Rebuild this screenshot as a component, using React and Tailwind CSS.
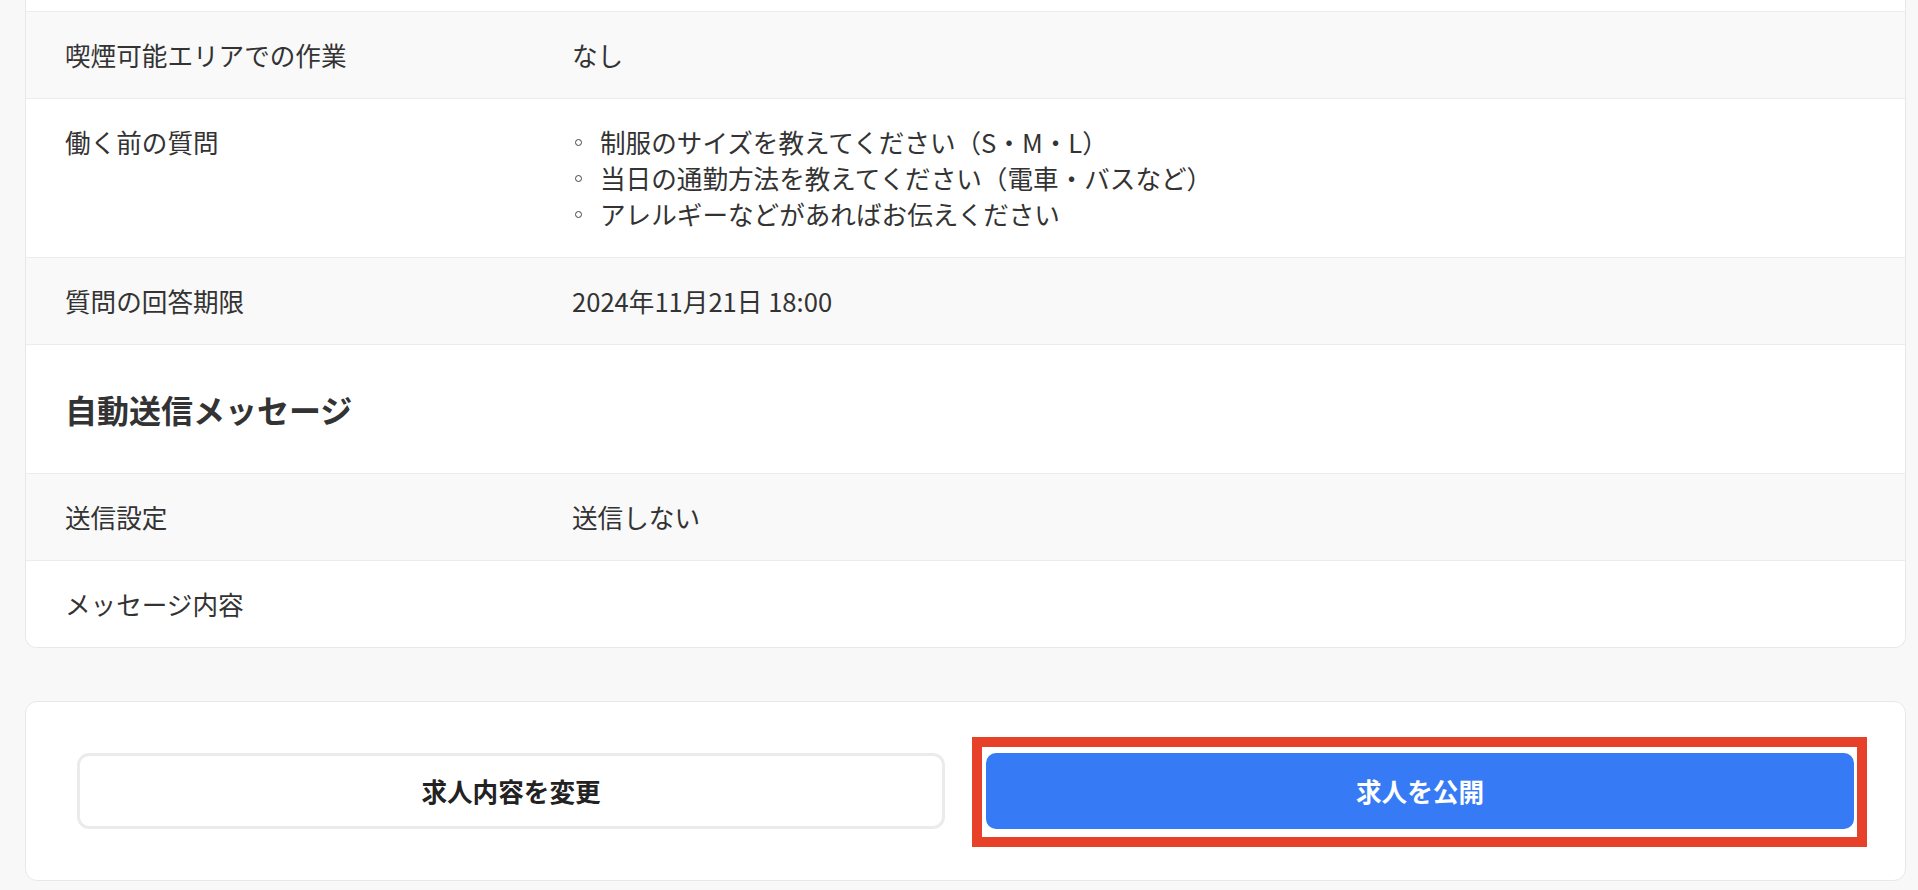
import React from "react";

const font = { fontFamily: '"Noto Sans CJK JP", "Noto Sans", sans-serif' };

function Row({ label, children, gray, top }) {
  return (
    <div
      className={`flex border-t border-[#ececec] px-[39px] py-[25px] text-[25.6px] leading-[36px] text-[#333333] ${
        gray ? "bg-[#f9f9f9]" : "bg-white"
      } ${top ? "items-start" : "items-center"}`}
    >
      <div className="w-[507px] shrink-0">{label}</div>
      <div className="flex-1">{children}</div>
    </div>
  );
}

function Bullet({ children }) {
  return (
    <li className="flex items-center">
      <span className="mr-[18px] ml-[3px] inline-block h-[7px] w-[7px] rounded-full border border-[#444444]" />
      <span>{children}</span>
    </li>
  );
}

export default function App() {
  return (
    <div style={font} className="min-h-[890px] w-full bg-[#f8f8f8] pl-[25px] pr-[12px] pb-[10px]">
      <div className="overflow-hidden rounded-b-[12px] border border-t-0 border-[#e8e8e8] bg-white">
        <div className="h-[11px] bg-white" />
        <Row label="喫煙可能エリアでの作業" gray>
          なし
        </Row>
        <Row label="働く前の質問" top>
          <ul>
            <Bullet>制服のサイズを教えてください（S・M・L）</Bullet>
            <Bullet>当日の通勤方法を教えてください（電車・バスなど）</Bullet>
            <Bullet>アレルギーなどがあればお伝えください</Bullet>
          </ul>
        </Row>
        <Row label="質問の回答期限" gray>
          2024年11月21日 18:00
        </Row>
        <div className="flex h-[129px] items-center border-t border-[#ececec] bg-white px-[39px]">
          <h2 className="text-[32px] font-bold leading-[48px] text-[#333333]">自動送信メッセージ</h2>
        </div>
        <Row label="送信設定" gray>
          送信しない
        </Row>
        <Row label="メッセージ内容">{""}</Row>
      </div>

      <div className="mt-[53px] grid grid-cols-2 gap-[41px] rounded-[12px] border border-[#e8e8e8] bg-white px-[51px] py-[51px]">
        <button className="flex h-[76px] items-center justify-center rounded-[12px] border-[3px] border-[#ebebeb] bg-white text-[25.6px] font-bold text-[#222222]">
          求人内容を変更
        </button>
        <div className="relative">
          <button className="flex h-[76px] w-full items-center justify-center rounded-[10px] bg-[#367bf5] text-[25.6px] font-bold text-white">
            求人を公開
          </button>
          <div className="pointer-events-none absolute -top-[16px] -bottom-[18px] -left-[14px] -right-[13px] border-[10px] border-[#e8412a]" />
        </div>
      </div>
    </div>
  );
}
